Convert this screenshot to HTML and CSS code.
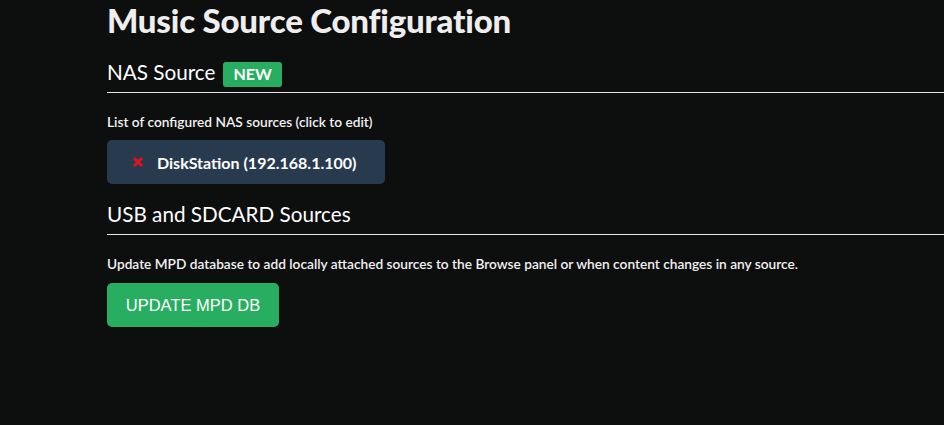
FILE: index.html
```html
<!DOCTYPE html>
<html>
<head>
<meta charset="utf-8">
<link rel="stylesheet" href="styles.css">
</head>
<body>
<div class="page">
  <h1 class="title">Music Source Configuration</h1>
  <div class="section-head first">
    <span class="section-title">NAS Source</span>
    <span class="badge">NEW</span>
  </div>
  <p class="note">List of configured NAS sources (click to edit)</p>
  <div class="source-item">
    <svg class="x-icon" width="12" height="12" viewBox="0 0 12 12"><path d="M2 2 L10 10 M10 2 L2 10" stroke="#e3101a" stroke-width="3" stroke-linecap="butt"/></svg>
    <span class="source-name">DiskStation (192.168.1.100)</span>
  </div>
  <div class="section-head second">
    <span class="section-title">USB and SDCARD Sources</span>
  </div>
  <p class="note">Update MPD database to add locally attached sources to the Browse panel or when content changes in any source.</p>
  <button class="btn">UPDATE MPD DB</button>
</div>
</body>
</html>
```
FILE: styles.css
```css
html, body {
  margin: 0;
  padding: 0;
  background: #0d0e0e;
  height: 100%;
}
body {
  font-family: Lato, "Open Sans", sans-serif;
  color: #eeeeee;
  overflow: hidden;
}
.page {
  padding-left: 107px;
  display: flex;
  flex-direction: column;
  align-items: flex-start;
}
.title {
  margin: 0;
  font-size: 33px;
  font-weight: 900;
  line-height: 40px;
  color: #eeeeee;
  letter-spacing: -0.2px;
}
.section-head {
  align-self: stretch;
  display: flex;
  align-items: baseline;
  gap: 8px;
  border-bottom: 1px solid #e6e6e6;
  padding-bottom: 8px;
}
.section-head.first {
  margin-top: 20px;
}
.section-head.second {
  margin-top: 18px;
}
.section-title {
  font-size: 20.7px;
  font-weight: 400;
  line-height: 24px;
  color: #ffffff;
}
.badge {
  background: #27ae60;
  color: #ffffff;
  font-weight: 700;
  font-size: 16px;
  line-height: 16px;
  padding: 4px 10px 5px;
  margin-bottom: -3px;
  border-radius: 3px;
}
.note {
  margin: 20px 0 0;
  font-size: 13.7px;
  font-weight: 600;
  line-height: 18px;
  color: #f2f2f2;
}
.source-item {
  margin-top: 9px;
  width: 278px;
  height: 44px;
  box-sizing: border-box;
  background: #283a4e;
  border-radius: 5px;
  display: flex;
  align-items: center;
  padding-left: 25px;
  gap: 13px;
}
.x-icon {
  display: block;
}
.source-name {
  font-size: 16px;
  font-weight: 700;
  color: #ffffff;
}
.btn {
  margin-top: 10px;
  width: 172px;
  height: 44px;
  border: none;
  border-radius: 5px;
  background: #27ae60;
  color: #ffffff;
  font-family: "Liberation Sans", Arial, sans-serif;
  font-size: 16.5px;
  font-weight: 400;
  padding: 0;
}
```
